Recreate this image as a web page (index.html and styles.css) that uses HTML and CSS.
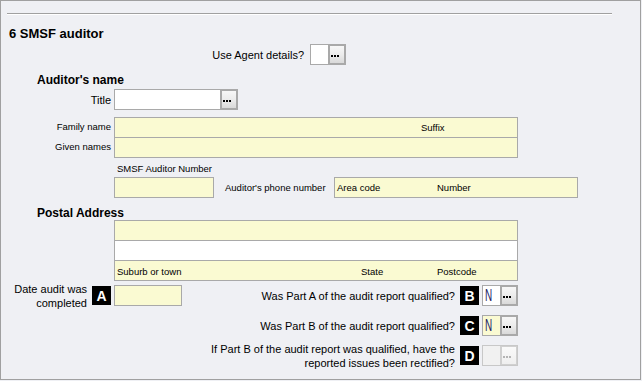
FILE: index.html
```html
<!DOCTYPE html>
<html lang="en">
<head>
  <meta charset="UTF-8" />
  <title>SMSF auditor</title>
  <link rel="stylesheet" href="styles.css">
</head>
<body>
  <div class="panel">
    <div class="rule"></div>
    <h2 class="section-title">6 SMSF auditor</h2>

    <div class="row agent-row">
      <span class="lbl lbl-agent">Use Agent details?</span>
      <span class="pick pick-small">
        <span class="pick-val"></span>
        <span class="pick-btn"><span class="pick-face"><i class="dots"></i></span></span>
      </span>
    </div>

    <h3 class="group-title">Auditor's name</h3>
    <div class="row title-row">
      <span class="lbl lbl-main">Title</span>
      <span class="pick pick-title">
        <span class="pick-val"></span>
        <span class="pick-btn"><span class="pick-face"><i class="dots"></i></span></span>
      </span>
    </div>

    <div class="name-block">
      <div class="side-labels">
        <span>Family name</span>
        <span>Given names</span>
      </div>
      <div class="stack stack-name">
        <div class="cell"><span class="suffix">Suffix</span></div>
        <div class="cell"></div>
      </div>
    </div>

    <div class="sub-caption">SMSF Auditor Number</div>
    <div class="row number-row">
      <span class="field field-abn"></span>
      <span class="small-lbl phone-lbl">Auditor's phone number</span>
      <span class="field field-phone">
        <span class="area">Area code</span>
        <span>Number</span>
      </span>
    </div>

    <h3 class="group-title postal-title">Postal Address</h3>
    <div class="stack stack-address">
      <div class="cell"></div>
      <div class="cell cell-white"></div>
      <div class="cell cell-labels">
        <span class="suburb">Suburb or town</span>
        <span class="state">State</span>
        <span>Postcode</span>
      </div>
    </div>

    <div class="qrow qrow-first">
      <span class="date-lbl">Date audit was<br>completed</span>
      <span class="badge">A</span>
      <span class="field field-date"></span>
      <span class="qtext">Was Part A of the audit report qualified?</span>
      <span class="badge">B</span>
      <span class="pick pick-yn">
        <span class="pick-val"><span class="yn">N</span></span>
        <span class="pick-btn"><span class="pick-face"><i class="dots"></i></span></span>
      </span>
    </div>

    <div class="qrow">
      <span class="qtext">Was Part B of the audit report qualified?</span>
      <span class="badge">C</span>
      <span class="pick pick-yn pick-yellow">
        <span class="pick-val"><span class="yn">N</span></span>
        <span class="pick-btn"><span class="pick-face"><i class="dots"></i></span></span>
      </span>
    </div>

    <div class="qrow">
      <span class="qtext">If Part B of the audit report was qualified, have the<br>reported issues been rectified?</span>
      <span class="badge">D</span>
      <span class="pick pick-yn pick-disabled">
        <span class="pick-val"></span>
        <span class="pick-btn"><span class="pick-face"><i class="dots"></i></span></span>
      </span>
    </div>
  </div>
</body>
</html>
```

FILE: styles.css
```css
body {
  margin: 0;
  background: #eff0f4;
  font-family: "Liberation Sans", Arial, sans-serif;
  color: #000;
}
.panel {
  box-sizing: border-box;
  width: 641px;
  height: 380px;
  border: 1px solid #a0a0a0;
  background: #eff0f4;
  padding-top: 12px;
}
.rule {
  margin-left: 6px;
  width: 605px;
  height: 1px;
  background: #a0a0a0;
  border-bottom: 1px solid #fff;
}
.section-title {
  margin: 11px 0 0 8px;
  font-size: 13px;
  line-height: 16px;
  font-weight: bold;
}
.group-title {
  margin: 8px 0 0 36px;
  font-size: 12px;
  line-height: 14px;
  font-weight: bold;
}
.row {
  display: flex;
  align-items: center;
  height: 21px;
}
.lbl {
  font-size: 11px;
  text-align: right;
}
.agent-row {
  margin-top: 2px;
}
.lbl-agent {
  width: 303px;
  margin-right: 6px;
}
.title-row {
  margin-top: 2px;
}
.lbl-main {
  width: 110px;
  margin-right: 3px;
}

/* pick list: value box plus "..." button */
.pick {
  box-sizing: border-box;
  display: flex;
  height: 21px;
  border: 1px solid #a9a9a9;
  background: #fff;
}
.pick-val {
  flex: 1;
  display: flex;
  align-items: center;
}
.pick-btn {
  display: flex;
  width: 14px;
  padding: 1px;
  border-left: 1px solid #a9a9a9;
  background: #a9a9a9;
}
.pick-face {
  flex: 1;
  background: linear-gradient(#f7f7f7, #ececec 50%, #d9d9d9);
}
.dots {
  display: block;
  width: 2px;
  height: 2px;
  margin: 9px 0 0 1px;
  background: #000;
  box-shadow: 3px 0 #000, 6px 0 #000;
}
.pick-small {
  width: 36px;
}
.pick-title {
  width: 124px;
}
.pick-yn {
  width: 36px;
}
.pick-yellow {
  background: #fafad2;
}
.pick-disabled {
  border-color: #c8c8c8;
  background: #f1f1f1;
}
.pick-disabled .pick-btn {
  border-left-color: #d0d0d0;
  background: #d0d0d0;
}
.pick-disabled .pick-face {
  background: linear-gradient(#fafafa, #efefef);
}
.pick-disabled .dots {
  background: #b4b4b4;
  box-shadow: 3px 0 #b4b4b4, 6px 0 #b4b4b4;
}
.yn {
  display: inline-block;
  margin-left: 2px;
  font-size: 16px;
  line-height: 19px;
  color: #1b1b66;
  transform: scaleX(0.62);
  transform-origin: left center;
}

/* stacked yellow entry boxes */
.name-block {
  display: flex;
  margin-top: 7px;
}
.side-labels {
  display: flex;
  flex-direction: column;
  width: 110px;
  margin-right: 3px;
}
.side-labels span {
  height: 20px;
  line-height: 20px;
  font-size: 9.5px;
  text-align: right;
}
.stack {
  box-sizing: border-box;
  border: 1px solid #a9a9a9;
  background: #fafad2;
}
.cell {
  display: flex;
  align-items: center;
  height: 19px;
  font-size: 9.5px;
}
.cell + .cell {
  border-top: 1px solid #a9a9a9;
}
.stack-name {
  width: 404px;
}
.suffix {
  margin-left: 306px;
}
.sub-caption {
  margin: 5px 0 0 116px;
  font-size: 9.5px;
  line-height: 12px;
}
.number-row {
  margin-top: 2px;
  padding-left: 113px;
}
.field {
  box-sizing: border-box;
  display: flex;
  align-items: center;
  height: 21px;
  border: 1px solid #a9a9a9;
  background: #fafad2;
  font-size: 9.5px;
}
.field-abn {
  width: 100px;
}
.small-lbl {
  font-size: 9.5px;
}
.phone-lbl {
  width: 109px;
  margin-left: 11px;
}
.field-phone {
  width: 244px;
  padding-left: 2px;
}
.area {
  width: 100px;
}
.postal-title {
  margin-top: 8px;
}
.stack-address {
  width: 404px;
  margin-left: 113px;
}
.cell-white {
  background: #fff;
}
.cell-labels {
  padding-left: 2px;
  padding-top: 1px;
  height: 18px;
}
.suburb {
  width: 244px;
}
.state {
  width: 76px;
}

/* questions with letter badges */
.qrow {
  display: flex;
  align-items: center;
  justify-content: flex-end;
  width: 517px;
  height: 21px;
  margin-top: 9px;
  font-size: 11px;
}
.qrow-first {
  margin-top: 4px;
}
.date-lbl {
  width: 86px;
  margin-right: 5px;
  line-height: 14px;
  text-align: right;
}
.badge {
  display: flex;
  align-items: center;
  justify-content: center;
  width: 19px;
  height: 19px;
  margin-right: 3px;
  background: #000;
  color: #fff;
  font-size: 14px;
  font-weight: bold;
}
.field-date {
  width: 68px;
  margin-right: auto;
}
.qtext {
  margin-right: 5px;
  line-height: 14px;
  text-align: right;
}
```
